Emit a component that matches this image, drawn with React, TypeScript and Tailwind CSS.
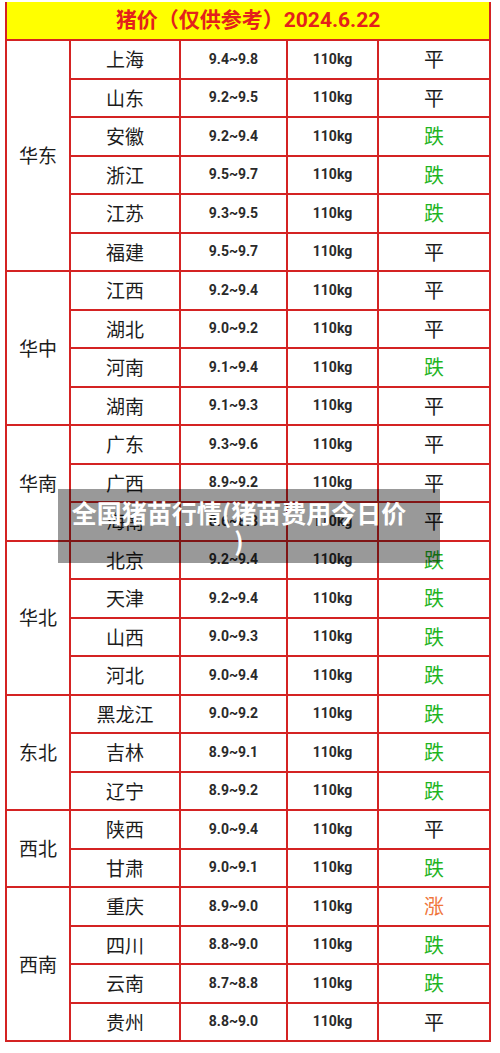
const cjk = '"Noto Sans CJK SC", "Noto Sans", sans-serif';
const num = 'Roboto, "Noto Sans CJK SC", sans-serif';

type Row = { city: string; price: string; trend: '平' | '跌' | '涨' };

const groups: { region: string; rows: Row[] }[] = [
  {
    region: '华东',
    rows: [
      { city: '上海', price: '9.4~9.8', trend: '平' },
      { city: '山东', price: '9.2~9.5', trend: '平' },
      { city: '安徽', price: '9.2~9.4', trend: '跌' },
      { city: '浙江', price: '9.5~9.7', trend: '跌' },
      { city: '江苏', price: '9.3~9.5', trend: '跌' },
      { city: '福建', price: '9.5~9.7', trend: '平' },
    ],
  },
  {
    region: '华中',
    rows: [
      { city: '江西', price: '9.2~9.4', trend: '平' },
      { city: '湖北', price: '9.0~9.2', trend: '平' },
      { city: '河南', price: '9.1~9.4', trend: '跌' },
      { city: '湖南', price: '9.1~9.3', trend: '平' },
    ],
  },
  {
    region: '华南',
    rows: [
      { city: '广东', price: '9.3~9.6', trend: '平' },
      { city: '广西', price: '8.9~9.2', trend: '平' },
      { city: '海南', price: '8.6~8.8', trend: '平' },
    ],
  },
  {
    region: '华北',
    rows: [
      { city: '北京', price: '9.2~9.4', trend: '跌' },
      { city: '天津', price: '9.2~9.4', trend: '跌' },
      { city: '山西', price: '9.0~9.3', trend: '跌' },
      { city: '河北', price: '9.0~9.4', trend: '跌' },
    ],
  },
  {
    region: '东北',
    rows: [
      { city: '黑龙江', price: '9.0~9.2', trend: '跌' },
      { city: '吉林', price: '8.9~9.1', trend: '跌' },
      { city: '辽宁', price: '8.9~9.2', trend: '跌' },
    ],
  },
  {
    region: '西北',
    rows: [
      { city: '陕西', price: '9.0~9.4', trend: '平' },
      { city: '甘肃', price: '9.0~9.1', trend: '跌' },
    ],
  },
  {
    region: '西南',
    rows: [
      { city: '重庆', price: '8.9~9.0', trend: '涨' },
      { city: '四川', price: '8.8~9.0', trend: '跌' },
      { city: '云南', price: '8.7~8.8', trend: '跌' },
      { city: '贵州', price: '8.8~9.0', trend: '平' },
    ],
  },
];

const trendColor = {
  平: 'text-[#1c1c1c]',
  跌: 'text-[#1fb51f]',
  涨: 'text-[#f0763c]',
};

const cell = 'border-2 border-[#d42323] text-center align-middle p-0';

export default function App() {
  return (
    <div className="relative w-[500px] h-[1053px] bg-white pt-[2px] pl-[5px]">
      <table className="border-collapse table-fixed w-[484px]">
        <colgroup>
          <col className="w-[64px]" />
          <col className="w-[110px]" />
          <col className="w-[107px]" />
          <col className="w-[91px]" />
          <col className="w-[112px]" />
        </colgroup>
        <tbody>
          <tr className="h-[38px]">
            <td
              colSpan={5}
              className="border-2 border-t-0 border-[#d42323] bg-[#ffff00] text-center align-middle text-[21px] font-bold text-[#e3211c]"
              style={{ fontFamily: num }}
            >
              猪价（仅供参考）2024.6.22
            </td>
          </tr>
          {groups.map((g) =>
            g.rows.map((r, i) => (
              <tr key={r.city} className="h-[38.5px]">
                {i === 0 && (
                  <td
                    rowSpan={g.rows.length}
                    className={`${cell} text-[19px] text-[#1c1c1c]`}
                    style={{ fontFamily: cjk }}
                  >
                    {g.region}
                  </td>
                )}
                <td className={`${cell} text-[19px] text-[#1c1c1c]`} style={{ fontFamily: cjk }}>
                  {r.city}
                </td>
                <td className={`${cell} text-[14px] font-bold text-[#2a2a2a]`} style={{ fontFamily: num }}>
                  {r.price}
                </td>
                <td className={`${cell} text-[14px] font-bold text-[#2a2a2a]`} style={{ fontFamily: num }}>
                  110kg
                </td>
                <td
                  className={`${cell} text-[20px] ${trendColor[r.trend]}`}
                  style={{ fontFamily: cjk }}
                >
                  {r.trend}
                </td>
              </tr>
            ))
          )}
        </tbody>
      </table>

      {/* caption strip laid over the table */}
      <div
        className="absolute left-[58px] top-[489px] w-[382px] h-[74px] bg-black/40 pt-[9px] pl-[8px] pr-[28px] text-center text-white font-bold text-[25px] leading-[28px] whitespace-nowrap"
        style={{ fontFamily: cjk }}
      >
        全国猪苗行情(猪苗费用今日价
        <br />)
      </div>
    </div>
  );
}
